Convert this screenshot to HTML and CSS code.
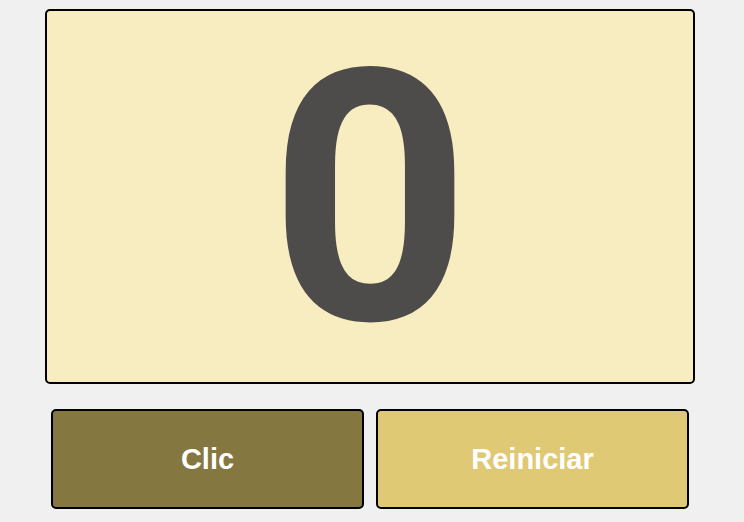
FILE: index.html
```html
<!DOCTYPE html>
<html lang="es">
<head>
<meta charset="utf-8">
<title>Contador</title>
<link rel="stylesheet" href="styles.css">
</head>
<body>
<main class="app">
  <div class="display"><span class="count">0</span></div>
  <div class="controls">
    <button class="btn btn-click" type="button">Clic</button>
    <button class="btn btn-reset" type="button">Reiniciar</button>
  </div>
</main>
</body>
</html>
```
FILE: styles.css
```css
html, body {
  margin: 0;
  padding: 0;
  background: #f0f0f0;
  font-family: "Liberation Sans", Arial, sans-serif;
}
.app {
  padding: 9px 0 0 45px;
  width: 650px;
  display: flex;
  flex-direction: column;
  gap: 25px;
}
.display {
  box-sizing: border-box;
  width: 650px;
  height: 375px;
  border: 2px solid #000;
  border-radius: 5px;
  background: #f7edc0;
  display: flex;
  align-items: center;
  justify-content: center;
  padding-top: 5px;
}
.count {
  font-family: Roboto, "Liberation Sans", sans-serif;
  font-size: 351px;
  font-weight: 700;
  line-height: 1;
  color: #4d4c4b;
}
.controls {
  display: flex;
  gap: 12px;
  padding: 0 6px;
}
.btn {
  box-sizing: border-box;
  width: 313px;
  height: 100px;
  border: 2px solid #000;
  border-radius: 5px;
  font-family: "Liberation Sans", Arial, sans-serif;
  font-size: 29px;
  font-weight: 700;
  color: #fff;
  padding: 0;
  cursor: pointer;
}
.btn-click { background: #857740; }
.btn-reset { background: #e0c974; }
```
